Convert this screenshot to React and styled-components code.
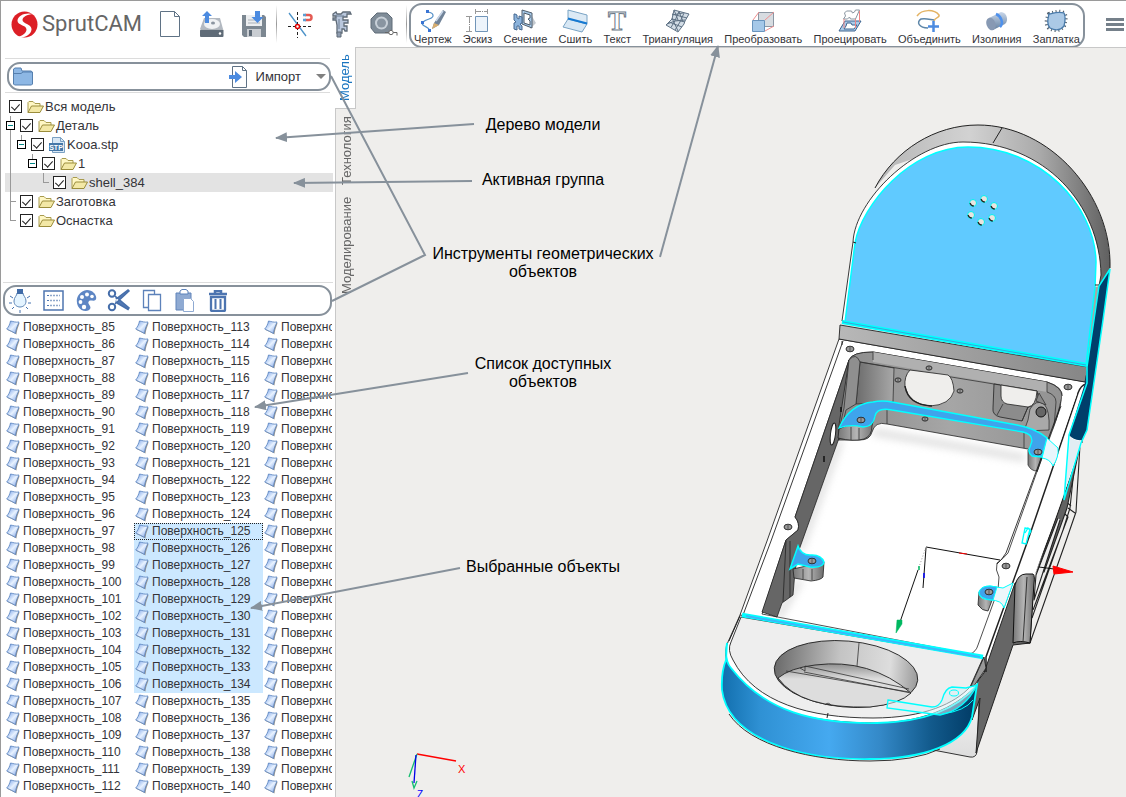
import React, { useState } from "react";
import styled, { createGlobalStyle } from "styled-components";

const LINE = "#87919b";

const GlobalStyle = createGlobalStyle`
  * {
    box-sizing: border-box;
  }
  body {
    margin: 0;
    font-family: "Liberation Sans", Arial, sans-serif;
    color: #333338;
    overflow: hidden;
  }
  button {
    font: inherit;
    color: inherit;
    background: none;
    border: 0;
    padding: 0;
    cursor: pointer;
  }
  svg {
    display: block;
    flex: none;
  }
`;

const Page = styled.div`
  position: relative;
  height: 100vh;
  display: flex;
  flex-direction: column;
  background: white;
  border-top: 1px solid #9a9a9a;
  border-left: 1px solid #9a9a9a;
`;

const Header = styled.header`
  height: 46px;
  flex: none;
  display: flex;
  align-items: center;
`;

const Brand = styled.div`
  display: flex;
  align-items: center;
  gap: 4px;
  width: 144px;
  padding-left: 10px;
  font-family: Roboto, sans-serif;
  font-size: 22px;
  line-height: 46px;
  color: #666;
`;

const FileTools = styled.div`
  display: flex;
  align-items: center;
  gap: 12px;
  margin-left: ${({ $first }) => ($first ? 10 : 0)}px;
`;

const IconButton = styled.button`
  width: 30px;
  height: 34px;
  display: flex;
  align-items: center;
  justify-content: center;
`;

const Separator = styled.span`
  width: 1px;
  height: 38px;
  margin: 0 ${({ $right }) => $right}px 0 7px;
  background: linear-gradient(#fff, #999, #fff);
`;

const Ribbon = styled.nav`
  flex: 1;
  min-width: 0;
  height: 45px;
  margin-top: 2px;
  padding: 4px 3px 0;
  display: flex;
  justify-content: space-between;
  border: 2px solid ${LINE};
  border-radius: 13px;
`;

const RibbonButton = styled.button`
  display: flex;
  flex-direction: column;
  align-items: center;
  height: 37px;
  font-size: 11px;
  line-height: 13px;
  white-space: nowrap;
`;

const MenuButton = styled.button`
  width: 20px;
  margin: 0 0 0 21px;
  display: grid;
  gap: 2px;
  span {
    height: 3px;
    width: 18px;
    background: #75808a;
  }
`;

const Body = styled.div`
  flex: 1;
  min-height: 0;
  display: flex;
`;

const Panel = styled.aside`
  width: 332px;
  flex: none;
  display: flex;
  flex-direction: column;
`;

const ImportSection = styled.section`
  margin: 11px 3px 4px 4px;
  padding: 3px 0 1px 2px;
  border-top: 1px solid #dcdcdc;
  border-bottom: 1px solid #dcdcdc;
`;

const ImportBar = styled.div`
  height: 29px;
  margin-right: -1px;
  padding: 0 3px;
  display: flex;
  align-items: center;
  border: 2px solid ${LINE};
  border-radius: 13px;
`;

const ImportButton = styled.button`
  display: flex;
  align-items: center;
  gap: 8px;
  margin-left: auto;
  font-size: 13px;
`;

const Caret = styled.button`
  margin-left: 15px;
  border-left: 5px solid transparent;
  border-right: 5px solid transparent;
  border-top: 5px solid #808080;
`;

const Tree = styled.ul`
  list-style: none;
  margin: 0;
  padding: 0 0 0 4px;
  height: 185px;
`;

const TreeRow = styled.li`
  height: 19px;
  display: flex;
  align-items: center;
  background: ${({ $active }) => ($active ? "#e3e3e3" : "none")};
  label {
    display: flex;
    align-items: center;
    font-size: 13px;
    line-height: 19px;
    margin-left: 4px;
  }
  label svg {
    margin: 0 1px 0 5px;
  }
`;

const strokes = {
  line: "5px 0 / 1px 19px",
  tee: "5px 0 / 1px 19px",
  elbow: "5px 0 / 1px 10px",
  blank: "0 0 / 0 0",
};

const Guide = styled.span`
  width: 11px;
  height: 19px;
  background: linear-gradient(#999, #999) ${({ $kind }) => strokes[$kind]} no-repeat,
    linear-gradient(#999, #999) 5px 9px / ${({ $kind }) => ($kind === "tee" || $kind === "elbow" ? 6 : 0)}px 1px
      no-repeat;
`;

const Branch = styled.span`
  width: 11px;
  height: 19px;
  display: grid;
  place-items: center;
  background: linear-gradient(#999, #999) 5px 0 / 1px ${({ $last }) => ($last ? 9 : 19)}px no-repeat;
`;

const Expander = styled.button`
  && {
    width: 9px;
    height: 9px;
    border: 1px solid #000;
    background: linear-gradient(#088, #088) 1px 3px / 5px 1px no-repeat white;
  }
`;

const Check = styled.input`
  appearance: none;
  width: 13px;
  height: 13px;
  margin: 0;
  border: 1px solid #222;
  background: white;
  display: grid;
  place-items: center;
  &:checked::before {
    content: "";
    width: 4px;
    height: 7px;
    margin-top: -2px;
    border: solid #222;
    border-width: 0 1px 1px 0;
    transform: rotate(42deg);
  }
`;

const ListSection = styled.section`
  border-top: 1px solid #dcdcdc;
  margin-left: 2px;
  padding-top: 2px;
`;

const ListTools = styled.div`
  height: 31px;
  margin-right: 1px;
  padding: 0 3px;
  display: flex;
  align-items: center;
  gap: 9px;
  border: 2px solid ${LINE};
  border-radius: 13px;
  button {
    width: 24px;
    display: flex;
    justify-content: center;
  }
`;

const Surfaces = styled.ul`
  list-style: none;
  margin: 3px 1px 0 4px;
  padding: 0;
  flex: 1;
  min-height: 0;
  overflow: hidden;
  display: grid;
  grid-auto-flow: column;
  grid-template-rows: repeat(28, 17px);
  grid-auto-columns: 129px;
`;

const Surface = styled.li`
  display: flex;
  align-items: center;
  gap: 3px;
  padding-left: 1px;
  font-size: 12px;
  line-height: 17px;
  white-space: nowrap;
  cursor: default;
  background: ${({ $selected }) => ($selected ? "#cce8ff" : "none")};
  outline: ${({ $focused }) => ($focused ? "1px dotted #222" : "none")};
  outline-offset: -1px;
`;

const Tabs = styled.div`
  width: 23px;
  flex: none;
  display: flex;
  flex-direction: column;
`;

const SideTabs = styled.div`
  flex: 1;
  margin-left: 2px;
  background: #efeeec;
  border-left: 1px solid #c8c8c8;
  border-top: 1px solid #c8c8c8;
`;

const Tab = styled.button`
  && {
    display: block;
    writing-mode: vertical-rl;
    transform: rotate(180deg);
    width: ${({ $active }) => ($active ? 23 : 20)}px;
    height: ${({ $size }) => $size}px;
    font-size: 13px;
    color: ${({ $active }) => ($active ? "#1a75c0" : "#666")};
    border-left: ${({ $active }) => ($active ? "1px solid #c8c8c8" : "0")};
  }
`;

const Stage = styled.main`
  flex: 1;
  min-width: 0;
  background: #efeeec;
  border-top: 1px solid #c8c8c8;
  svg {
    width: 100%;
    height: 100%;
  }
`;

const Overlay = styled.div`
  position: absolute;
  inset: -1px 0 0 -1px;
  pointer-events: none;
`;

const Note = styled.p`
  position: absolute;
  margin: 0;
  left: ${({ $x }) => $x}px;
  top: ${({ $y }) => $y}px;
  transform: translateX(-50%);
  font-size: 16px;
  line-height: 18px;
  text-align: center;
  white-space: pre;
  color: #000;
`;

const stroke = { fill: "none", stroke: "#5f7285", strokeWidth: 1 };

function Logo() {
  return (
    <svg width="27" height="27" viewBox="0 0 27 27">
      <circle cx="13.500" cy="13.500" r="13" fill="#dc1f26" />
      <path d="M22 3C15 1 7 4 6.500 9.500c-.5 5 9 4.500 9 9C15.500 22 11 25 6 26.500c8 1 14-3 14.500-8C21 13 11.500 13 11.500 9 11.500 6 16 3.500 22 3z" fill="#fff" />
    </svg>
  );
}

const NewIcon = () => (
  <svg width="22" height="28" viewBox="0 0 22 28"><path d="M1.500 1.500h14l5 5v20h-19zM15.500 1.500v5h5" {...stroke} /></svg>
);

const OpenIcon = () => (
  <svg width="26" height="28" viewBox="0 0 26 28">
    <path d="M5 8h16l3 11H1z" fill="#b3b9c1" />
    <ellipse cx="13" cy="14" rx="8" ry="5" fill="#f0f2f4" />
    <ellipse cx="14" cy="13" rx="2" ry="1.500" fill="#8b95a0" />
    <rect x="1" y="19.500" width="23.500" height="7.500" rx="1" fill="#5f6b77" />
    <circle cx="21" cy="23.500" r="1.200" fill="#fff" />
    <path d="M8 1l5 5h-3v7H6V6H3z" fill="#4c8be0" />
  </svg>
);

const SaveIcon = () => (
  <svg width="26" height="28" viewBox="0 0 26 28">
    <path d="M1 5h22l2 2v20H3l-2-2z" fill="#7c8791" />
    <path d="M5 5h16v11H5z" fill="#eceef0" />
    <path d="M7 10h12M7 13h12" stroke="#aab1b8" />
    <path d="M6 19h14v8H6z" fill="#c9cdd2" /><path d="M8 20h3v6H8z" fill="#5f6b77" />
    <path d="M14 1h5v6h3.500L16.500 13 10.500 7H14z" fill="#4c8be0" />
  </svg>
);

const SnapIcon = () => (
  <svg width="26" height="28" viewBox="0 0 26 28">
    <path d="M2 3l17 23" stroke="#4b92c8" strokeWidth="1.300" />
    <path d="M10.500 2v26M1 16.500h25" stroke="#222" strokeDasharray="3 2" />
    <path d="M18 5h4a2.500 2.500 0 010 5h-4" fill="none" stroke="#e45b54" strokeWidth="2.500" />
    <path d="M16 5h3M16 10h3" stroke="#5c9fd2" strokeWidth="2.500" />
    <circle cx="10.500" cy="16.500" r="2" fill="#fff" stroke="#e00000" strokeWidth="1.500" />
  </svg>
);

const CaliperIcon = () => (
  <svg width="22" height="28" viewBox="0 0 22 28">
    <path d="M2 4l3-2 1 2h4l2-2h7l1 2h-4v3h-4v3h5v3h-4v3h3v5h-2l-1-2h-2v4H6v-8l-1-5H2V8h3V6H2z" fill="#b9c7dc" stroke="#5f6b77" strokeWidth="1.300" />
    <path d="M6 22h4v5H6z" fill="#8e9cb0" stroke="#5f6b77" />
    <path d="M8 9v10M5 6h8" stroke="#687a90" />
  </svg>
);

const TapeIcon = () => (
  <svg width="30" height="28" viewBox="0 0 30 28">
    <path d="M8 3h10l5 5v12l-3 3H6l-4-5V9z" fill="#7f8c98" stroke="#606c78" />
    <circle cx="12.500" cy="13" r="6.500" fill="#c8d0d8" /><circle cx="12.500" cy="13" r="4.500" fill="#8995a1" />
    <path d="M16 22.500h12v3" fill="none" stroke="#666" /><circle cx="22" cy="22.500" r="2.200" fill="#fff" stroke="#666" />
  </svg>
);

const DraftIcon = () => (
  <svg width="26" height="24" viewBox="0 0 26 24">
    <path d="M8 3c6 1 7 5 1 7s-8 4-6 6 6 2 7 6" fill="none" stroke="#5490c8" strokeWidth="1.200" />
    <path d="M12 20l2-6L23 1l3 2-7 13z" fill="#718398" /><path d="M12 20l2-6 5 2z" fill="#d9ae6e" /><path d="M16 12l7-10" stroke="#c8d6e8" strokeWidth="1.500" />
    <path d="M6 1h3v3H6zM1 12h3v3H1zM8 20h3v3H8z" fill="#3974d4" />
  </svg>
);

const SketchIcon = () => (
  <svg width="24" height="24" viewBox="0 0 24 24">
    <path d="M9.500 7.500h12v15h-12z" fill="#edf4fb" stroke="#7195b8" />
    <path d="M9.500 0v5M21.500 0v5M9.500 2.500h12M0 7.500h6M0 22.500h6M3.500 7.500v15" stroke="#999" fill="none" />
    <path d="M14 1h4v3h-4zM2 13h3v4H2z" fill="#fff" /><path d="M14 2.500h4M3.500 13v4" stroke="#888" strokeDasharray="1 1" />
  </svg>
);

const SectionIcon = () => (
  <svg width="24" height="24" viewBox="0 0 24 24">
    <path d="M17 4l6 10-6 6z" fill="#c3c9cf" /><path d="M9 1l10 3v15l-10-4z" fill="#a6c9e8" stroke="#505d6b" />
    <path d="M11 4l6 2v3l-2 1 2 2v4l-6-2z" fill="#fff" stroke="#505d6b" />
    <path d="M2 5l2 1v3l2 1V7l3 1v6l-2 1 2 2v4l-3-1v-3H4v4l-3-1v-6l2-1-2-2V5z" fill="#8bb3dc" stroke="#466890" />
  </svg>
);

const StitchIcon = () => (
  <svg width="26" height="24" viewBox="0 0 26 24">
    <path d="M6 1l19 5v9L6 10z" fill="#dceaf5" stroke="#79a3c4" /><path d="M6 10l19 5-5 8-19-5z" fill="#d7e7f4" stroke="#79a3c4" /><path d="M6 9.500l19 5" stroke="#1579d2" strokeWidth="2" />
  </svg>
);

const TextIcon = () => (
  <svg width="24" height="24" viewBox="0 0 24 24">
    <text x="12" y="21" textAnchor="middle" fontFamily="Liberation Serif" fontWeight="bold" fontSize="27" fill="#fff" stroke="#6d7a88" strokeWidth="1">T</text>
  </svg>
);

const MeshIcon = () => (
  <svg width="24" height="24" viewBox="0 0 24 24">
    <path d="M8 1l15 4-4 7-1 3-6 8-12-7 6-6z" fill="#d3dde6" stroke="#5f7285" />
    <path d="M13 2.500l-4 9-4 7M18 4l-4 9-5 8M6 5l15 4M6 10l13 3M3 13l13 5M8 1l4 10M13 2.500l4 10M6 9l6 13M1 15l8-3 10-1M6 6l11-2" {...stroke} />
  </svg>
);

const TransformIcon = () => (
  <svg width="24" height="24" viewBox="0 0 24 24">
    <path d="M7.500 3.500h15v14h-15z" fill="#d7dce1" stroke="#8b97a3" />
    <path d="M2 11l6-8M14 11l9-8M14 22l9-5" stroke="#f09090" /><path d="M1.500 11.500h12v11h-12z" fill="#a5c8e8" stroke="#6994bd" />
  </svg>
);

const ProjectIcon = () => (
  <svg width="24" height="24" viewBox="0 0 24 24">
    <path d="M7 12h16l-6 10H1z" fill="#a9c9e8" stroke="#3f6490" /><path d="M9 14h4l1 2h5l-3 4H6l2-3z" fill="#fff" stroke="#3f6490" />
    <path d="M8.500 2h5l1 2 2-1 1-2h4l-4 9h-5l-1-2-2 2h-4l2-3-1-3z" fill="#fff" stroke="#8995a0" /><path d="M21.500 2v11M17.500 10v9M6 10v9" stroke="#f08585" />
  </svg>
);

const JoinIcon = () => (
  <svg width="26" height="24" viewBox="0 0 26 24">
    <path d="M1 7c5-7 17-7 22-1 1 3-4 2-5 6" fill="none" stroke="#e3b363" strokeWidth="1.500" />
    <path d="M12 19C3 19 0 13 5 10c4-1 7 0 13 1" fill="none" stroke="#5d86a8" strokeWidth="1.500" /><path d="M17.500 12v11M12 17.500h11" stroke="#4c8be0" strokeWidth="2.500" />
  </svg>
);

const IsoIcon = () => (
  <svg width="24" height="24" viewBox="0 0 24 24">
    <path d="M4 9L16 3c6 0 8 9 4 12L8 21z" fill="url(#steel)" /><ellipse cx="6" cy="15" rx="4.500" ry="6.500" fill="#8799b3" transform="rotate(-20 6 15)" />
    <path d="M11 5c5 2 8 9 4 13" fill="none" stroke="#4f91ec" strokeWidth="2.500" />
  </svg>
);

const PatchIcon = () => (
  <svg width="24" height="24" viewBox="0 0 24 24">
    <path d="M5 5c5-1 9-4 15-1 3 4 1 9 0 13-4 5-10 5-15 2-4-4-2-10 0-14z" fill="none" stroke="#53616e" strokeWidth="4" strokeDasharray="1 2.500" />
    <path d="M5 5c5-1 9-3 15-1 2 4 1 9 0 13-4 5-10 4-14 2-4-4-2-10-1-14z" fill="#abc9e6" stroke="#4a7bab" strokeWidth="1.300" />
  </svg>
);

const FolderIcon = () => (
  <svg width="17" height="14" viewBox="0 0 17 14">
    <path d="M1 12.500V2.500l1-1h4l2 2h5v3" fill="#fff7c4" stroke="#a89b4e" /><path d="M1 12.500L4.500 6h12L13 12.500z" fill="#f3e8a6" stroke="#9b8d3c" />
  </svg>
);

const StpIcon = () => (
  <svg width="17" height="16" viewBox="0 0 17 16">
    <path d="M3.500.5h8l4 4v11h-12z" fill="#d9e8f5" stroke="#7ba0c2" /><path d="M11.500.5v4h4" fill="none" stroke="#7ba0c2" />
    <rect y="6" width="14" height="8" fill="#4678a8" />
    <text x="7" y="12.500" textAnchor="middle" fontFamily="Liberation Sans" fontWeight="bold" fontSize="7" fill="#fff">STP</text>
  </svg>
);

const SurfaceIcon = () => (
  <svg width="14" height="16" viewBox="0 0 14 16">
    <path d="M5 2c3 0 5 1 8.500 1C13 6 11 9 10.500 14.500 8 13 5 11.500 1.500 10z" fill="#a09a90" />
    <path d="M4.500 1c3 .5 5 1.500 8.500 1C12 5 10 8 9.500 13.500 7 12 4 10.500.7 9 2.500 7 4 4 4.500 1z" fill="url(#surf)" stroke="#5580bd" strokeWidth=".8" />
  </svg>
);

const BigFolder = () => (
  <svg width="21" height="19" viewBox="0 0 21 19">
    <path d="M1.500 17V2l1.500-1h6l1 3h9l1.500 1v12l-1 1h-17z" fill="#8db7e4" stroke="#557fae" /><path d="M2 6.500h7l2-1.500h9" fill="none" stroke="#557fae" />
  </svg>
);

const ImportIcon = () => (
  <svg width="20" height="22" viewBox="0 0 20 22">
    <path d="M4.500.5h10l4 4v17h-14zM14.500.5v4h4" {...stroke} /><path d="M1 9h6V5l7 6-7 6v-4H1z" fill="#4c8be0" />
  </svg>
);

const LampIcon = () => (
  <svg width="22" height="24" viewBox="0 0 22 24">
    <path d="M8 4h6c0 3 3 4 3 8 0 8-12 8-12 0 0-4 3-5 3-8z" fill="#e4f4ff" stroke="#5f86b5" /><path d="M8 0h6v5H8z" fill="#3f6ba8" />
    <path d="M1 7l3 2M0 14h3M3 20l2-2M21 7l-3 2M22 14h-3M19 20l-2-2M11 21v3" stroke="#4573b0" />
  </svg>
);

const PropsIcon = () => (
  <svg width="21" height="21" viewBox="0 0 21 21">
    <path d="M1 1h19v19H1z" fill="#fff" stroke="#4f76b0" strokeWidth="1.500" /><path d="M4 5.500h2M4 10.500h2M4 15.500h2" stroke="#4f76b0" /><path d="M7 5.500h10M7 10.500h10M7 15.500h10" stroke="#90a8cb" strokeDasharray="2 1" strokeWidth="1.500" />
  </svg>
);

const PaletteIcon = () => (
  <svg width="21" height="22" viewBox="0 0 21 22">
    <path d="M11 0c7 0 11 7 8.500 10-2 2-6-1-7 2-1 2 2 3 2 6-1 3-5 4-9 2-7-4-7-18 5.500-20z" fill="#5e86c4" />
    <g fill="#fff"><circle cx="11" cy="4.500" r="2" /><circle cx="16" cy="6.500" r="1.800" /><circle cx="6" cy="7" r="2" /><circle cx="4.500" cy="12" r="1.900" /><circle cx="8" cy="17" r="2.200" /></g>
  </svg>
);

const CutIcon = () => (
  <svg width="24" height="23" viewBox="0 0 24 23">
    <path d="M8 7l14 12-1 1.500L10 14M8 15L22 2l-1-1L9 10" fill="#5279b4" stroke="#466eaa" strokeWidth="1.500" /><circle cx="5" cy="4.500" r="3.200" fill="none" stroke="#466eaa" strokeWidth="2" /><circle cx="5" cy="18" r="3.200" fill="none" stroke="#466eaa" strokeWidth="2" />
  </svg>
);

const CopyIcon = () => (
  <svg width="20" height="23" viewBox="0 0 20 23"><path d="M1.500 1.500h11v17h-11z" fill="#fff" stroke="#5d82ba" strokeWidth="1.300" /><path d="M6.500 5.500h12v16h-12z" fill="#fff" stroke="#5d82ba" strokeWidth="1.300" /></svg>
);

const PasteIcon = () => (
  <svg width="20" height="24" viewBox="0 0 20 24">
    <path d="M1 4h15v17H1z" fill="#8faad2" stroke="#6084ba" /><path d="M5 2l2-1.500h4L13 2v3H5z" fill="#fff" stroke="#5d82ba" /><path d="M8.500 9.500h7l3 3v10h-10z" fill="#fff" stroke="#8faad2" />
  </svg>
);

const TrashIcon = () => (
  <svg width="20" height="22" viewBox="0 0 20 22"><path d="M1 4h18M7 3V1h6v2" fill="none" stroke="#4c74b0" strokeWidth="2.500" /><path d="M3 7h14v13q0 1-1 1H4q-1 0-1-1z" fill="none" stroke="#4c74b0" strokeWidth="2.300" /><path d="M7.500 9v10M12.500 9v10" stroke="#4c74b0" strokeWidth="2" /></svg>
);

const ribbon = [
  ["Чертеж", DraftIcon],
  ["Эскиз", SketchIcon],
  ["Сечение", SectionIcon],
  ["Сшить", StitchIcon],
  ["Текст", TextIcon],
  ["Триангуляция", MeshIcon],
  ["Преобразовать", TransformIcon],
  ["Проецировать", ProjectIcon],
  ["Объединить", JoinIcon],
  ["Изолиния", IsoIcon],
  ["Заплатка", PatchIcon],
];

const tree = [
  { name: "Вся модель", guides: [] },
  { name: "Деталь", guides: ["open"] },
  { name: "Kooa.stp", guides: ["line", "last"], Icon: StpIcon },
  { name: "1", guides: ["line", "blank", "last"] },
  { name: "shell_384", guides: ["line", "blank", "blank", "elbow"], active: true },
  { name: "Заготовка", guides: ["tee"] },
  { name: "Оснастка", guides: ["elbow"] },
];

const listTools = [
  ["Показать", LampIcon],
  ["Свойства", PropsIcon],
  ["Цвет", PaletteIcon],
  ["Вырезать", CutIcon],
  ["Копировать", CopyIcon],
  ["Вставить", PasteIcon],
  ["Удалить", TrashIcon],
];

const surfaces = Array.from({ length: 84 }, (_, i) => 85 + i);

// small screw hole
const Hole = ({ x, y, r = 4 }) => (
  <g>
    <ellipse cx={x} cy={y} rx={r} ry={r * 0.7} fill="#999" stroke="#222" strokeWidth=".9" />
    <path d={`M${x} ${y - 2}v4`} stroke="#444" strokeWidth=".8" />
  </g>
);

function Model() {
  return (
    <svg viewBox="356 48 770 749" preserveAspectRatio="xMinYMin meet">
      <defs>
        <linearGradient id="rim"><stop offset="0" stopColor="#b5b5b5" /><stop offset=".4" stopColor="#d2d2d2" /><stop offset=".7" stopColor="#aaa" /><stop offset="1" stopColor="#606060" /></linearGradient>
        <linearGradient id="front"><stop offset="0" stopColor="#126fae" /><stop offset=".15" stopColor="#2f91d4" /><stop offset=".42" stopColor="#45a9f0" /><stop offset=".62" stopColor="#3489c8" /><stop offset=".82" stopColor="#125a8c" /><stop offset="1" stopColor="#003a64" /></linearGradient>
        <linearGradient id="bar"><stop offset="0" stopColor="#b8b8b8" /><stop offset="1" stopColor="#868686" /></linearGradient>
        <linearGradient id="wall"><stop offset="0" stopColor="#8a8a8a" /><stop offset=".5" stopColor="#a6a6a6" /><stop offset="1" stopColor="#929292" /></linearGradient>
        <linearGradient id="leg"><stop offset="0" stopColor="#777" /><stop offset=".5" stopColor="#b5b5b5" /><stop offset="1" stopColor="#6c6c6c" /></linearGradient>
        <linearGradient id="pocket"><stop offset="0" stopColor="#6c6c6c" /><stop offset="1" stopColor="#a8a8a8" /></linearGradient>
        <linearGradient id="bore"><stop offset="0" stopColor="#6a6a6a" /><stop offset=".45" stopColor="#c4c4c4" /><stop offset=".8" stopColor="#ddd" /><stop offset="1" stopColor="#999" /></linearGradient>
        <linearGradient id="floor" x2="0" y2="1"><stop offset="0" stopColor="#909090" /><stop offset=".35" stopColor="#ddd" /><stop offset="1" stopColor="#ddd" /></linearGradient>
        <linearGradient id="cap" x2="0" y2="1"><stop offset="0" stopColor="#f4f4f4" /><stop offset="1" stopColor="#ddd" /></linearGradient>
        <filter id="shade" x="-20%" y="-20%" width="140%" height="140%"><feGaussianBlur stdDeviation="4" /></filter>
      </defs>

      {/* right struts */}
      <g fill="#efeeec" stroke="#222" strokeWidth="1.100" strokeLinejoin="round">
        <path d="M1080 445L1076 512L1066 541L1030 643L1013 643L1034 575L1052 530L1064 500z" />
        <path d="M1076 450L1070 508L1063 530L1032 618M1064 500L1071 506M1061 510L1068 517L1033 610" fill="none" />
        <path d="M1079 450L1066 490L1037 572L1044 572L1067 508z" fill="#626262" />
        <path d="M1068 508L1075 513M1058 518L1036 575L1034 600L1060 520" fill="#eee" />
      </g>

      {/* body shell and its dark side */}
      <path d="M839 339L740 615L983 657L986 672L1015 583L1034 577L1082 443L1086 382z" fill="#fff" />
      <path d="M979 700L977 752Q976 758 970 757L933 750Q960 735 979 698z" fill="url(#cap)" stroke="#333" />
      <path d="M1015 583L984 673L973 687L972 720L980 698L976 753L1013 645L1030 643L1034 577z" fill="#666" stroke="#222" />
      <path d="M1015 585Q1018 574 1026 574H1033Q1035 576 1034 583L1030 643Q1020 640 1013 643z" fill="url(#leg)" stroke="#111" />
      <path d="M1027 577L1023 642" stroke="#333" />

      {/* cavity */}
      <path d="M849 360Q852 352 873 352L1047 382Q1064 387 1062 398L1060 407L1008 553Q1003 559 997 563Q995 570 999 577L998 590L978 645Q976 652 970 654L762 614L786 540L798 530Q800 523 795 517z" fill="#fff" stroke="#222" strokeWidth=".8" />
      <g filter="url(#shade)" fill="none" stroke="#aaa" strokeWidth="5" opacity=".55">
        <path d="M840 440L800 550M873 432L1025 458M800 580L778 618" />
      </g>
      <path d="M849 360Q852 352 873 352L1047 382Q1062 387 1062 396L1052 440L1050 452L1037 458L1028 449L887 424Q875 421 872 432Q870 440 860 440L838 440L836 410z" fill="url(#wall)" stroke="#222" strokeWidth=".8" />
      <path d="M873 352L1047 382V392L873 362z" fill="#b0b0b0" />
      <path d="M860 362L894 368L893 402L856 404z" fill="url(#pocket)" stroke="#333" strokeWidth=".8" />
      <path d="M873 352V360M860 362L1000 385M849 360L846 407M855 362L850 403M1047 382V392M1047 392Q1056 395 1056 402L1053 440M887 409V424M1024 431V448" fill="none" stroke="#333" strokeWidth=".8" />
      <path d="M849 360L795 517Q800 523 798 530L786 540L762 612L777 617L782 603L793 595L795 571L799 550L839 438V425z" fill="#666" stroke="#222" strokeWidth=".8" />
      <path d="M849 360L844 408L839 430V440L846 410L856 404L860 362Q856 352 849 360z" fill="#8f8f8f" stroke="#333" strokeWidth=".8" />
      <path d="M786 541L783 602M790 541L790 597" stroke="#222" strokeWidth=".8" />
      <path d="M910 370Q904 376 905 387Q909 404 930 406Q950 405 954 391Q953 378 948 375z" fill="#efeeec" stroke="#222" strokeWidth=".8" />
      <path d="M905 386Q908 405 932 406" fill="none" stroke="#222" strokeWidth="1.500" />
      <path d="M994 384L1037 391L1040 405L1028 407L1022 421L1000 417Q992 415 993 408z" fill="#8c8c8c" stroke="#222" strokeWidth=".8" />
      <path d="M1001 385L1037 391Q1036 406 1028 407L1007 404Q1001 402 1001 396z" fill="#efeeec" stroke="#222" strokeWidth=".8" />
      <path d="M1028 420L1030 409Q1036 399 1044 404Q1050 410 1049 430L1024 431z" fill="#a9a9a9" stroke="#333" strokeWidth=".8" />
      <path d="M1039 393L1046 405L1036 401zM1003 404L997 415M1028 407L1022 421" fill="#888" stroke="#333" strokeWidth=".8" />
      <circle cx="1041" cy="412" r="5" fill="#666" stroke="#111" />
      <path d="M839 429L838 438Q853 442 864 439Q872 436 872 426L875 412z" fill="url(#leg)" stroke="#222" strokeWidth=".8" />
      <path d="M851 427V440M859 428V440" stroke="#333" strokeWidth=".8" />
      <path d="M1028 450V465Q1031 471 1037 471L1043 453z" fill="url(#leg)" stroke="#333" strokeWidth=".8" />
      <ellipse cx="833" cy="434" rx="2.500" ry="11" fill="#fff" stroke="#222" transform="rotate(7 833 434)" />
      <path d="M841 407v5M824 456v6" stroke="#111" strokeWidth="1.500" />
      <Hole x={929} y={368} r={3} /><Hole x={898} y={380} r={3} /><Hole x={960} y={391} r={3} /><Hole x={925} y={419} r={3} />

      {/* frame outline */}
      <g fill="none" stroke="#222" strokeWidth=".9">
        <path d="M839 339L767 541L740 615M843 341L771 541L743 615M842 341V345M839 339L1086 382L1082 443" />
        <path d="M1086 384Q1081 385 1078 393L1053 467L1028 540L986 657V672" strokeWidth="1.500" />
        <path d="M1060 407L1006 553Q1001 561 997 564" />
      </g>
      <path d="M1061 408L1040 466L1052 466L1077 394L1062 396z" fill="#fff" />
      <path d="M1061 406L1037 472" stroke="#222" strokeWidth=".8" />
      <Hole x={850} y={349} /><Hole x={1068} y={387} /><Hole x={788} y={527} /><Hole x={1006} y={566} />

      {/* selected flange */}
      <path d="M839 428Q850 404 873 402Q882 400 892 402L1017 425Q1035 428 1047 438L1042 457L1032 456Q1027 452 1030 447L1032 441Q1032 434 1023 432L892 410Q877 407 875 416Q873 427 863 427Q850 424 839 428z" fill="#3fa4ec" stroke="#00ffff" strokeWidth="1.300" />
      <path d="M1047 438L1058 448Q1059 457 1053 466Q1050 459 1042 458z" fill="#e8f6fc" stroke="#00ffff" />
      <Hole x={861} y={420} /><Hole x={1038} y={452} />

      {/* side tabs */}
      <path d="M793 569L794 578L811 581Q821 580 823 577L824 562z" fill="url(#leg)" stroke="#222" strokeWidth=".8" />
      <path d="M803 569V579M812 569V580" stroke="#333" strokeWidth=".8" />
      <path d="M790 569L798 546Q801 555 810 555Q821 554 824 562Q823 568 810 567L798 564z" fill="#3fa4ec" stroke="#00ffff" strokeWidth="1.500" />
      <Hole x={812} y={561} />
      <path d="M979 592L978 605Q982 611 988 611L994 595z" fill="url(#leg)" stroke="#222" strokeWidth=".8" />
      <path d="M979 592Q981 586 990 586L1003 588L1013 583L1004 608Q1002 600 990 600Q978 599 979 592z" fill="#edf6fa" stroke="#00ffff" />
      <path d="M979 592Q981 586 990 586L997 587L993 600Q979 599 979 592z" fill="#3fa4ec" stroke="#00ffff" />
      <Hole x={989} y={592} />
      <path d="M1025 528l5 1-4 15-4-1zM1025 533l3-5 3 3-2 4" fill="none" stroke="#00ffff" strokeWidth="1.300" />

      {/* lid */}
      <path d="M875 188C895 150 935 125 978 125C1050 125 1112 195 1110 268L1100 286L1080 240L963 142L895 165z" fill="url(#rim)" />
      <path d="M875 188C895 150 935 125 978 125C1050 125 1112 195 1110 268" fill="none" stroke="#222" />
      <path d="M1002 128L993 143" stroke="#222" />
      <path d="M842 321L853 242C855 200 915 142 963 142C1045 142 1100 205 1101 275L1099 286L1087 367z" fill="#fff" stroke="#222" strokeWidth=".9" />
      <path d="M1095 287L1099 286L1088 367H1084z" fill="#a6a6a6" />
      <path d="M840 325L839 339L1085 382L1088 367z" fill="url(#bar)" stroke="#222" strokeWidth=".9" />
      <path d="M845 322L855 243C862 205 910 147 968 147C1040 147 1095 205 1096 262L1095 287L1086 365z" fill="#60caff" stroke="#00ffff" strokeWidth="1.500" />
      <path d="M842 322L1087 365" stroke="#00ffff" strokeWidth="4" /><path d="M843 322L1086 365" stroke="#39a6d8" />
      <path d="M853 242l3 1M1095 285h5" stroke="#222" />
      {[[973, 203], [984, 199], [994, 206], [971, 215], [981, 222], [992, 218]].map(([x, y]) => (
        <g key={x}>
          <circle cx={x} cy={y} r="3.500" fill="#e9e4df" stroke="#00f0f0" />
          <path d={`M${x - 3} ${y}q1 3 4 3`} fill="none" stroke="#222" strokeWidth="1.200" />
        </g>
      ))}
      <path d="M1110 269L1099 286L1087 367L1085 383L1069 435Q1074 441 1082 440L1087 430L1103 320z" fill="#003f6b" />
      <path d="M1070 437Q1075 441 1081 441L1065 490z" fill="#e2edf3" />
      <path d="M1110 269L1099 286L1087 367V383L1069 435L1064 500L1081 443L1087 430L1103 320z" fill="none" stroke="#00ffff" strokeWidth="1.500" />

      {/* front end */}
      <path d="M740 615L728 642Q724 650 727 663C750 710 810 723 877 723C930 722 960 703 977 685L983 657z" fill="#fff" stroke="#222" strokeWidth=".9" />
      <path d="M741 617L731 642Q727 650 733 660C755 703 810 718 873 718C925 718 955 703 970 687L983 658z" fill="#eee" stroke="#222" strokeWidth=".9" />
      <path d="M984 657L986 668L974 686H971z" fill="#999" stroke="#222" strokeWidth=".9" />
      <path d="M828 713L827 718M740 616L729 641" stroke="#222" />
      <ellipse cx="846" cy="674" rx="72" ry="33" fill="url(#bore)" stroke="#222" strokeWidth=".9" transform="rotate(5 846 674)" />
      <path d="M778 678Q790 668 815 665Q870 658 911 693Q900 704 870 707Q800 709 778 678z" fill="url(#floor)" stroke="#222" strokeWidth=".9" />
      <path d="M805 666L909 689M804 672L911 693M786 671L909 692M800 668L805 671V666M859 643L857 666M825 705q3-4 7 1" fill="none" stroke="#333" strokeWidth=".8" />
      <path d="M727 643Q724 660 731 668C765 712 815 724 877 723C930 722 960 706 977 685L972 717C965 744 923 759 870 759C795 760 728 737 722 690Q721 672 726 660z" fill="url(#front)" stroke="#00ffff" strokeWidth="1.800" />
      <path d="M729 714C750 746 812 761 870 761Q915 761 940 749" fill="none" stroke="#333" />
      <path d="M888 700L932 707Q939 707 942 700Q945 688 952 687L966 688L977 685Q965 710 940 715L887 708z" fill="#d9f0f6" fillOpacity=".55" stroke="#00ffff" strokeWidth="1.300" />
      <ellipse cx="954" cy="693" rx="4.500" ry="3" fill="none" stroke="#00ffff" />
      <path d="M942 714Q965 711 973 700" fill="none" stroke="#00ffff" />
      <path d="M742 615L983 657" stroke="#00ffff" strokeWidth="4.500" /><path d="M746 616L980 657" stroke="#3bb9fa" strokeWidth="2" />

      {/* axes */}
      <g fill="none" stroke="#111">
        <path d="M926 547L1000 560M926 548L923 588M918 570L900 622M1039 567L1054 569" /><path d="M926 547L918 570" stroke="#999" strokeDasharray="1 2" />
      </g>
      <path d="M959 553l8 1M1053 566l20 6-19 2z" fill="red" stroke="red" /><path d="M924 573v5" stroke="blue" strokeWidth="1.500" />
      <path d="M897 620h5v4l-6 9z" fill="#00b860" stroke="#00b860" strokeWidth=".5" /><path d="M919 566v4" stroke="#00b860" strokeWidth="1.500" />
      <path d="M417 754L456 761" stroke="red" strokeWidth="1.300" /><path d="M417 754L409 777M412 781l2 7 3-7" fill="none" stroke="#14bd70" strokeWidth="1.300" /><path d="M416 755L414 783" stroke="#0000e8" strokeWidth="1.300" />
      <text x="458" y="773" fontFamily="Liberation Sans" fontSize="11" fill="red">X</text>
      <text x="417" y="798" fontFamily="Liberation Sans" fontSize="10" fill="blue">Z</text>
    </svg>
  );
}

function Callouts() {
  return (
    <Overlay>
      <svg width="760" height="640" viewBox="0 0 760 640" fill="none" stroke={LINE} strokeWidth="2">
        <defs>
          <marker id="tip" markerWidth="12" markerHeight="10" refX="11" refY="5" orient="auto" markerUnits="userSpaceOnUse">
            <path d="M0 0L12 5L0 10z" fill={LINE} stroke="none" />
          </marker>
          <linearGradient id="surf" x2="1" y2="1"><stop offset="0" stopColor="#6f9be6" /><stop offset=".5" stopColor="#e8f2ff" /><stop offset="1" stopColor="#6f98e2" /></linearGradient>
          <linearGradient id="steel" x2="0" y2="1"><stop offset="0" stopColor="#c9d7ea" /><stop offset="1" stopColor="#64809f" /></linearGradient>
        </defs>
        <path d="M331 76L425 255L332 301" />
        <path d="M474 124L276 138" markerEnd="url(#tip)" />
        <path d="M472 181L294 183" markerEnd="url(#tip)" />
        <path d="M660 257L718 46" markerEnd="url(#tip)" />
        <path d="M468 373L255 407" markerEnd="url(#tip)" />
        <path d="M460 568L251 608" markerEnd="url(#tip)" />
      </svg>
      <Note $x={543} $y={116}>Дерево модели</Note>
      <Note $x={543} $y={171}>Активная группа</Note>
      <Note $x={543} $y={245}>{"Инструменты геометрических\nобъектов"}</Note>
      <Note $x={543} $y={355}>{"Список доступных\nобъектов"}</Note>
      <Note $x={543} $y={558}>Выбранные объекты</Note>
    </Overlay>
  );
}

function App() {
  const [focused, setFocused] = useState(125);

  return (
    <Page>
      <GlobalStyle />
      <Header>
        <Brand><Logo />SprutCAM</Brand>
        <FileTools $first>
          <IconButton aria-label="Новый"><NewIcon /></IconButton>
          <IconButton aria-label="Открыть"><OpenIcon /></IconButton>
          <IconButton aria-label="Сохранить"><SaveIcon /></IconButton>
        </FileTools>
        <Separator $right={8} />
        <FileTools>
          <IconButton aria-label="Привязка"><SnapIcon /></IconButton>
          <IconButton aria-label="Штангенциркуль"><CaliperIcon /></IconButton>
          <IconButton aria-label="Рулетка"><TapeIcon /></IconButton>
        </FileTools>
        <Separator $right={2} />
        <Ribbon>
          {ribbon.map(([label, Icon]) => (
            <RibbonButton key={label}><Icon />{label}</RibbonButton>
          ))}
        </Ribbon>
        <MenuButton aria-label="Меню"><span /><span /><span /></MenuButton>
      </Header>
      <Body>
        <Panel>
          <ImportSection>
            <ImportBar>
              <BigFolder />
              <ImportButton><ImportIcon />Импорт</ImportButton>
              <Caret aria-label="Ещё" />
            </ImportBar>
          </ImportSection>
          <Tree>
            {tree.map(({ name, guides, active, Icon = FolderIcon }) => (
              <TreeRow key={name} $active={active}>
                {guides.map((kind, i) =>
                  kind === "open" || kind === "last" ? (
                    <Branch key={i} $last={kind === "last"}><Expander aria-label="Свернуть" /></Branch>
                  ) : (
                    <Guide key={i} $kind={kind} />
                  )
                )}
                <label>
                  <Check type="checkbox" defaultChecked />
                  <Icon />
                  {name}
                </label>
              </TreeRow>
            ))}
          </Tree>
          <ListSection>
            <ListTools>
              {listTools.map(([label, Icon]) => (
                <button key={label} aria-label={label}><Icon /></button>
              ))}
            </ListTools>
          </ListSection>
          <Surfaces>
            {surfaces.map((n) => (
              <Surface key={n} $selected={n >= 125 && n <= 134} $focused={n === focused} onClick={() => setFocused(n)}>
                <SurfaceIcon />Поверхность_{n}
              </Surface>
            ))}
          </Surfaces>
        </Panel>
        <Tabs>
          <Tab $active $size={61}>Модель</Tab>
          <SideTabs>
            <Tab $size={83}>Технология</Tab>
            <Tab $size={107}>Моделирование</Tab>
          </SideTabs>
        </Tabs>
        <Stage><Model /></Stage>
      </Body>
      <Callouts />
    </Page>
  );
}

export default App;
